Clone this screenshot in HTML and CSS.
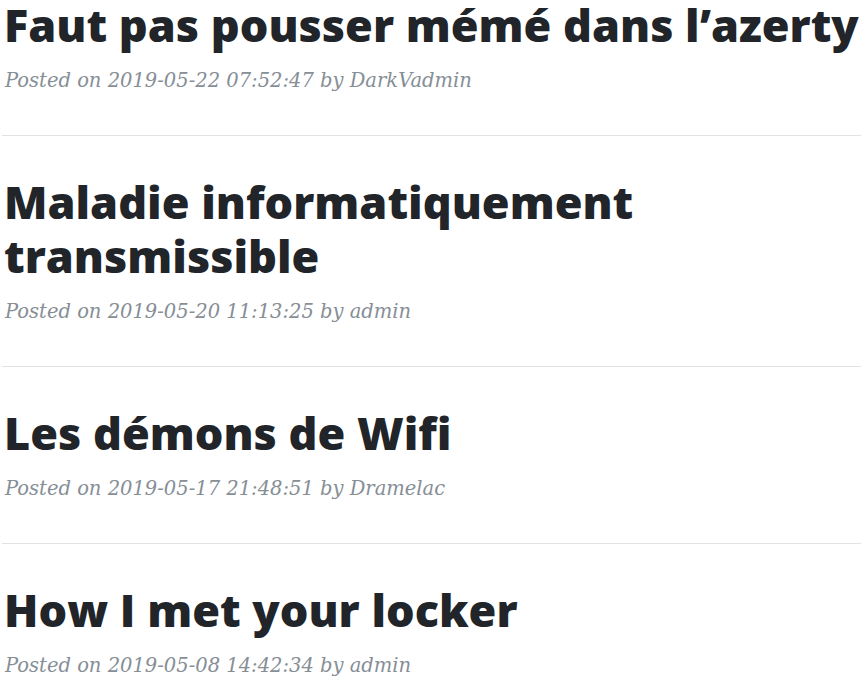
FILE: index.html
```html
<!DOCTYPE html>
<html lang="fr">
<head>
  <meta charset="UTF-8" />
  <meta name="viewport" content="width=device-width, initial-scale=1.0" />
  <title>Blog</title>
  <link rel="stylesheet" href="styles.css">
</head>
<body>
  <div class="posts">
    <div class="post-preview">
      <a href="#"><h2 class="post-title">Faut pas pousser mémé dans l’azerty</h2></a>
      <p class="post-meta">Posted on 2019-05-22 07:52:47 by DarkVadmin</p>
    </div>
    <hr>
    <div class="post-preview">
      <a href="#"><h2 class="post-title">Maladie informatiquement transmissible</h2></a>
      <p class="post-meta">Posted on 2019-05-20 11:13:25 by admin</p>
    </div>
    <hr>
    <div class="post-preview">
      <a href="#"><h2 class="post-title">Les démons de Wifi</h2></a>
      <p class="post-meta">Posted on 2019-05-17 21:48:51 by Dramelac</p>
    </div>
    <hr>
    <div class="post-preview">
      <a href="#"><h2 class="post-title">How I met your locker</h2></a>
      <p class="post-meta">Posted on 2019-05-08 14:42:34 by admin</p>
    </div>
  </div>
</body>
</html>
```

FILE: styles.css
```css
* {
  box-sizing: border-box;
}
body {
  margin: 0;
  background: #fff;
  color: #212529;
  overflow: hidden;
}
.posts {
  width: 861px;
  padding-left: 4px;
  margin-top: -2px;
}
.post-preview a {
  color: #212529;
  text-decoration: none;
}
.post-title {
  font-family: 'Open Sans', sans-serif;
  font-weight: 800;
  font-size: 45px;
  line-height: 54px;
  margin: 0;
}
.post-meta {
  font-family: 'DejaVu Serif', serif;
  font-style: italic;
  font-size: 19.5px;
  line-height: 33px;
  color: #868e96;
  margin: 12px 0 0 1px;
}
hr {
  border: 0;
  border-top: 1px solid #e2e2e2;
  margin: 38px 0 39px -2px;
}
```
